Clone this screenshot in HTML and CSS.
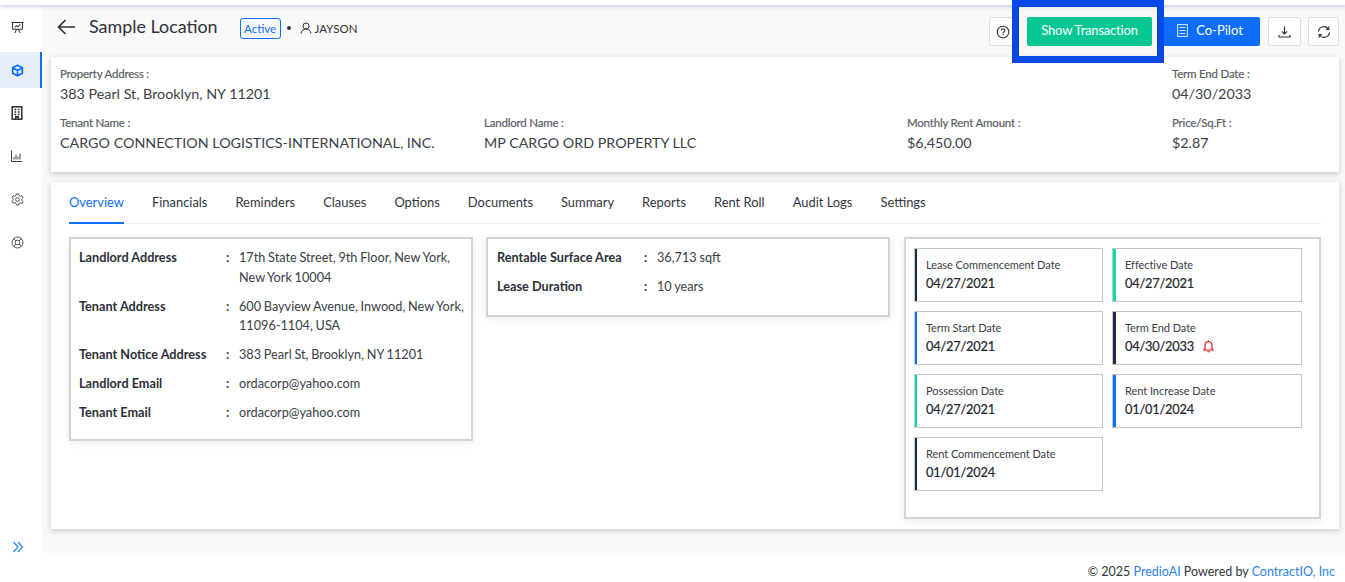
FILE: index.html
```html
<!DOCTYPE html>
<html lang="en">
<head>
<meta charset="utf-8">
<title>Sample Location</title>
<link rel="stylesheet" href="styles.css">
</head>
<body>
<div class="app">
  <div class="topbar"></div>
  <div class="layout">
    <aside class="sidebar">
      <nav class="side-nav">
        <a class="side-item first"><svg width="13" height="13" viewBox="0 0 14 14" fill="none" stroke="#333" stroke-width="1.1"><path d="M.5 1.500h13M1.700 1.500v7.500h10.600V1.500M4 13 6 9M10 13 8 9M4 7l2-2 1.500 1.200L10 3.500"/></svg></a>
        <a class="side-item active"><svg width="13" height="13" viewBox="0 0 14 14" fill="none" stroke="#0d6efd" stroke-width="1.8"><path d="M7 1.300 12.200 4v6L7 12.700 1.800 10V4zM1.800 4 7 7l5.200-3M7 7v5.700"/></svg></a>
        <a class="side-item"><svg width="12" height="14" viewBox="0 0 12 14" fill="none" stroke="#222" stroke-width="1.400"><rect x="1.200" y=".8" width="9.600" height="12.400"/><path d="M3.500 3.500h1.700M6.800 3.500h1.700M3.500 6h1.700M6.800 6h1.700M3.500 8.500h1.700M6.800 8.500h1.700M4.800 13v-2.200h2.400V13"/></svg></a>
        <a class="side-item"><svg width="12" height="12" viewBox="0 0 12 12" fill="none" stroke="#444" stroke-width="1"><path d="M.5 .5v11h11M3 9.500V7M5 9.500V4.500M7 9.500V6.500M9 9.500V3.500"/></svg></a>
        <a class="side-item"><svg width="13" height="13" viewBox="0 0 14 14" fill="none" stroke="#444" stroke-width="1"><path d="M5.800 1h2.400l.4 1.700 1.500.8 1.700-.5 1.100 2-1.200 1.300v1.400l1.200 1.300-1.100 2-1.700-.5-1.500.8-.4 1.700H5.800l-.4-1.700-1.500-.8-1.700.5-1.100-2 1.200-1.300V6.300L1.100 5l1.100-2 1.700.5 1.500-.8z"/><circle cx="7" cy="7" r="2"/></svg></a>
        <a class="side-item"><svg width="13" height="13" viewBox="0 0 14 14" fill="none" stroke="#444" stroke-width="1"><circle cx="7" cy="7" r="5.900"/><circle cx="7" cy="7" r="2.500"/><path d="M2.900 2.900l2.400 2.400M11.100 2.900 8.700 5.300M2.900 11.100l2.400-2.400M11.100 11.100 8.700 8.700"/></svg></a>
      </nav>
      <a class="side-toggle"><svg width="12" height="12" viewBox="0 0 12 12" fill="none" stroke="#2f86f6" stroke-width="1.300"><path d="M1.500 1 6 6l-4.500 5M6 1l4.500 5L6 11"/></svg></a>
    </aside>
    <main class="main">
      <header class="page-head">
        <div class="head-left">
          <svg class="back" width="18" height="16" viewBox="0 0 18 16" fill="none" stroke="#333" stroke-width="1.700"><path d="M18 8H1.500M8.500 1 1.500 8l7 7"/></svg>
          <h1 class="title">Sample Location</h1>
          <span class="badge">Active</span>
          <span class="dot"></span>
          <svg class="user" width="12" height="12" viewBox="0 0 12 12" fill="none" stroke="#333" stroke-width="1"><circle cx="6" cy="4" r="3"/><path d="M1 11.500C1.500 8.500 3.500 7 6 7s4.500 1.500 5 4.500"/></svg>
          <span class="owner">JAYSON</span>
        </div>
        <div class="actions">
          <button class="btn btn-outline btn-help"><svg width="14" height="14" viewBox="0 0 14 14" fill="none" stroke="#333" stroke-width="1.100"><circle cx="7" cy="7" r="5.800"/><path d="M5.200 5.500C5.300 3.400 8.800 3.400 8.800 5.400c0 1.400-1.800 1.400-1.800 3M7 9.500v1"/></svg></button>
          <button class="btn btn-green">Show Transaction</button>
          <button class="btn btn-blue"><svg width="11" height="13" viewBox="0 0 11 13" fill="none" stroke="#cfe2ff" stroke-width="1.100"><rect x=".6" y=".6" width="9.800" height="11.800"/><path d="M2.500 3.500h6M2.500 6.500h6M2.500 9.500h6"/></svg>Co-Pilot</button>
          <button class="btn btn-outline btn-icon"><svg width="13" height="12" viewBox="0 0 13 12" fill="none" stroke="#333" stroke-width="1.200"><path d="M6.500 .5v7M4 5.500l2.500 2.500L9 5.500M1 9v2h11V9"/></svg></button>
          <button class="btn btn-outline btn-refresh"><svg width="14" height="14" viewBox="0 0 14 14" fill="none" stroke="#333" stroke-width="1.200"><path d="M1.500 6.500A5.500 5.500 0 0 1 11.500 4M12.500 7.500A5.500 5.500 0 0 1 2.500 10M11.800 1.500V4.300H9M2.200 12.500V9.700H5"/></svg></button>
        </div>
      </header>

      <section class="info-card">
        <div class="info-row">
          <div class="info-cell wide"><div class="info-label">Property Address :</div><div class="info-value">383 Pearl St, Brooklyn, NY 11201</div></div>
          <div class="info-cell"><div class="info-label">Term End Date :</div><div class="info-value">04/30/2033</div></div>
        </div>
        <div class="info-row">
          <div class="info-cell"><div class="info-label">Tenant Name :</div><div class="info-value">CARGO CONNECTION LOGISTICS-INTERNATIONAL, INC.</div></div>
          <div class="info-cell"><div class="info-label">Landlord Name :</div><div class="info-value">MP CARGO ORD PROPERTY LLC</div></div>
          <div class="info-cell"><div class="info-label">Monthly Rent Amount :</div><div class="info-value">$6,450.00</div></div>
          <div class="info-cell"><div class="info-label">Price/Sq.Ft :</div><div class="info-value">$2.87</div></div>
        </div>
      </section>

      <section class="detail-card">
        <nav class="tabs">
          <a class="tab active">Overview</a>
          <a class="tab">Financials</a>
          <a class="tab">Reminders</a>
          <a class="tab">Clauses</a>
          <a class="tab">Options</a>
          <a class="tab">Documents</a>
          <a class="tab">Summary</a>
          <a class="tab">Reports</a>
          <a class="tab">Rent Roll</a>
          <a class="tab">Audit Logs</a>
          <a class="tab">Settings</a>
        </nav>
        <div class="panels">
          <div class="panel panel-left">
            <dl class="facts">
              <dt>Landlord Address</dt><dd class="colon">:</dd><dd>17th State Street, 9th Floor, New York, New York 10004</dd>
              <dt>Tenant Address</dt><dd class="colon">:</dd><dd>600 Bayview Avenue, Inwood, New York, 11096-1104, USA</dd>
              <dt>Tenant Notice Address</dt><dd class="colon">:</dd><dd>383 Pearl St, Brooklyn, NY 11201</dd>
              <dt>Landlord Email</dt><dd class="colon">:</dd><dd>ordacorp@yahoo.com</dd>
              <dt>Tenant Email</dt><dd class="colon">:</dd><dd>ordacorp@yahoo.com</dd>
            </dl>
          </div>
          <div class="panel panel-mid">
            <dl class="facts">
              <dt>Rentable Surface Area</dt><dd class="colon">:</dd><dd>36,713 sqft</dd>
              <dt>Lease Duration</dt><dd class="colon">:</dd><dd>10 years</dd>
            </dl>
          </div>
          <div class="panel panel-right">
            <div class="dates">
              <div class="date-card thin navy"><div class="date-label">Lease Commencement Date</div><div class="date-value">04/27/2021</div></div>
              <div class="date-card green"><div class="date-label">Effective Date</div><div class="date-value">04/27/2021</div></div>
              <div class="date-card thin blue"><div class="date-label">Term Start Date</div><div class="date-value">04/27/2021</div></div>
              <div class="date-card navy"><div class="date-label">Term End Date</div><div class="date-value">04/30/2033<svg class="bell" width="11" height="13" viewBox="0 0 11 13" fill="none" stroke="#f00000" stroke-width="1.100"><path d="M1 10h9L9 8.500V5a3.500 3.500 0 0 0-7 0v3.500zM4.300 11.800h2.400M5.500 1.500V.5"/></svg></div></div>
              <div class="date-card thin green"><div class="date-label">Possession Date</div><div class="date-value">04/27/2021</div></div>
              <div class="date-card blue"><div class="date-label">Rent Increase Date</div><div class="date-value">01/01/2024</div></div>
              <div class="date-card thin navy"><div class="date-label">Rent Commencement Date</div><div class="date-value">01/01/2024</div></div>
            </div>
          </div>
        </div>
      </section>
    </main>
  </div>
  <footer class="footer">© 2025 <a class="link">PredioAI</a> Powered by <a class="link">ContractIO, Inc</a></footer>
  <div class="highlight"></div>
</div>
</body>
</html>
```
FILE: styles.css
```css
* { box-sizing: border-box; }
html, body { margin: 0; padding: 0; }
body {
  font-family: "Lato", "Liberation Sans", sans-serif;
  color: #2b2f38;
  background: #fff;
  overflow: hidden;
}
.app { position: relative; width: 1345px; height: 582px; display: flex; flex-direction: column; }
.topbar { height: 5px; background: #fff; box-shadow: 0 1px 4px rgba(60, 90, 170, .35); position: relative; z-index: 2; }
.layout { height: 548px; display: flex; }
.sidebar { width: 42px; background: #fff; display: flex; flex-direction: column; justify-content: space-between; }
.side-nav { display: flex; flex-direction: column; }
.side-item { height: 43px; display: flex; align-items: center; justify-content: center; border-right: 2px solid transparent; padding-right: 6px; }
.side-item.first { height: 44px; margin-bottom: 3px; }
.side-item.active { height: 36px; background: #e6eef9; border-right-color: #0d6efd; margin-bottom: 3.5px; }
.side-toggle { display: flex; justify-content: center; height: 12px; padding-right: 6px; }
.main { flex: 1; background: #f9f9f9; padding: 0 6px 0 9px; min-width: 0; }
.page-head { height: 52px; display: flex; align-items: flex-start; justify-content: space-between; }
.head-left { display: flex; align-items: center; height: 44px; padding-left: 6px; }
.back { margin-right: 14px; }
.title { margin: 0 22px 0 0; font-size: 17.900px; font-weight: 400; color: #2f323a; position: relative; top: -1px; }
.badge { border: 1px solid #0d6efd; border-radius: 3px; color: #0d6efd; font-size: 11.500px; height: 21px; line-height: 19px; width: 41px; text-align: center; margin-top: 2px; }
.dot { width: 4px; height: 4px; border-radius: 50%; background: #333; margin: 2px 9px 0 6px; }
.user { margin: 2px 3px 0 0; }
.owner { font-size: 11.500px; color: #333; margin-top: 2px; }
.actions { display: flex; gap: 8px; padding-top: 12px; }
.btn { height: 29px; border-radius: 2px; font-family: inherit; font-size: 13px; display: flex; align-items: center; justify-content: center; padding: 0 0 3px; cursor: pointer; }
.btn-outline { background: #fff; border: 1px solid #ddd; padding-bottom: 0; }
.btn-help { width: 30px; padding-right: 3px; }
.btn-icon { width: 33px; }
.btn-refresh { width: 31px; margin-left: -1px; }
.btn-green { width: 125px; background: #05c793; color: #fff; border: 0; letter-spacing: -.2px; }
.btn-blue { width: 100px; background: #0d6efd; color: #fff; border: 0; gap: 8px; }
.info-card { height: 115px; background: #fff; box-shadow: 0 2px 6px rgba(0,0,0,.2); padding: 8px 0 0 9px; margin-bottom: 10px; }
.info-row { display: grid; grid-template-columns: 424px 423px 265px 1fr; height: 49px; }
.info-cell.wide { grid-column: span 3; }
.info-label { font-size: 11.500px; letter-spacing: -.2px; line-height: 17px; color: #5b5e66; -webkit-text-stroke: .2px #5b5e66; }
.info-value { font-size: 14.300px; line-height: 20px; margin-top: 2px; color: #3c3f47; }
.detail-card { height: 347px; background: #fff; box-shadow: 0 2px 6px rgba(0,0,0,.2); padding: 0 18px; }
.tabs { display: flex; gap: 28px; height: 42px; border-bottom: 1px solid #eee; }
.tab { font-size: 12.920px; height: 42px; line-height: 40px; color: #33363e; }
.tab.active { color: #0d6efd; border-bottom: 2px solid #0d6efd; }
.panels { display: flex; align-items: flex-start; margin-top: 13px; gap: 13px; }
.panel { background: #fff; border: 2px solid #d4d4d4; box-shadow: 0 2px 8px rgba(0,0,0,.08); }
.panel-left { width: 404px; height: 204px; padding: 9px 2px 9px 8px; }
.panel-mid { width: 404px; height: 80px; padding: 9px 2px 9px 9px; }
.panel-right { width: 417px; height: 282px; padding: 9px 8px; margin-left: 1px; }
.facts { display: grid; grid-template-columns: 147px 13px 1fr; row-gap: 9.500px; margin: 0; font-size: 12.700px; line-height: 19.500px; }
.facts dt { font-weight: 700; color: #2b2f38; }
.facts dd { margin: 0; color: #3a3d45; word-spacing: -.5px; }
.facts .colon { font-weight: 700; }
.dates { display: grid; grid-template-columns: 189px 190px; grid-auto-rows: 54px; gap: 9px; }
.date-card { --bar: #1f2a44; border: 1px solid #c6c6c6; padding: 8px 0 0 12px; box-shadow: inset 3px 0 0 var(--bar); }
.date-card.thin { padding-left: 11px; box-shadow: inset 2px 0 0 var(--bar); }
.date-card.navy { --bar: #1f2a44; }
.date-card.green { --bar: #05dfa3; }
.date-card.blue { --bar: #0d6efd; }
.date-label { font-size: 11px; letter-spacing: -.05px; line-height: 16px; color: #3a3d45; }
.date-value { font-size: 12.800px; letter-spacing: -.2px; line-height: 20px; color: #23262e; -webkit-text-stroke: .2px #23262e; display: flex; align-items: center; }
.bell { margin-left: 9px; }
.footer { height: 29px; text-align: right; padding: 10px 10px 0 0; font-size: 12.500px; line-height: 18px; color: #33363e; }
.link { color: #2f7fe8; }
.highlight { position: absolute; left: 1012px; top: 0; width: 152px; height: 63px; border: 7px solid #0748e6; z-index: 5; pointer-events: none; }
```
